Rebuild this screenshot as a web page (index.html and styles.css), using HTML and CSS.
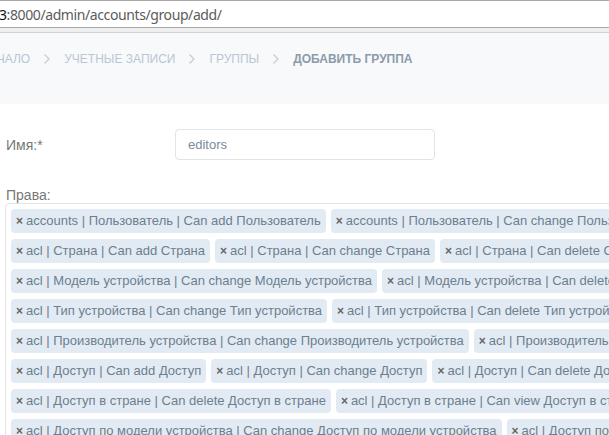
FILE: index.html
```html
<!DOCTYPE html>
<html lang="ru">
<head>
  <meta charset="UTF-8" />
  <meta name="viewport" content="width=device-width, initial-scale=1">
  <title>Добавить группа</title>
  <link rel="stylesheet" href="styles.css">
</head>
<body>
  <div class="urlbar">
    <span class="url"><span class="host">3</span>:8000/admin/accounts/group/add/</span>
  </div>
  <div class="urlbar-shadow"></div>

  <div class="page">
    <div class="crumbs">
      <a href="#">Начало</a>
      <svg class="sep" width="8" height="12" viewBox="0 0 8 12"><path d="M1.5 1.5 6 6l-4.5 4.5" fill="none" stroke="#c3ced9" stroke-width="1.3"/></svg>
      <a href="#">Учетные записи</a>
      <svg class="sep" width="8" height="12" viewBox="0 0 8 12"><path d="M1.5 1.5 6 6l-4.5 4.5" fill="none" stroke="#c3ced9" stroke-width="1.3"/></svg>
      <a href="#">Группы</a>
      <svg class="sep" width="8" height="12" viewBox="0 0 8 12"><path d="M1.5 1.5 6 6l-4.5 4.5" fill="none" stroke="#c3ced9" stroke-width="1.3"/></svg>
      <span class="current">Добавить группа</span>
    </div>

    <div class="content">
      <form class="group-form">
        <div class="form-row">
          <label for="name">Имя:*</label>
          <input type="text" id="name" value="editors">
        </div>

        <div class="perm-label">Права:</div>
        <div class="select-box">
          <ul class="chips">
            <li class="chip"><span class="remove">×</span>accounts | Пользователь | Can add Пользователь</li>
            <li class="chip"><span class="remove">×</span>accounts | Пользователь | Can change Пользователь</li>
            <li class="chip"><span class="remove">×</span>accounts | Пользователь | Can delete Пользователь</li>
            <li class="chip"><span class="remove">×</span>accounts | Пользователь | Can view Пользователь</li>
            <li class="chip"><span class="remove">×</span>acl | Страна | Can add Страна</li>
            <li class="chip"><span class="remove">×</span>acl | Страна | Can change Страна</li>
            <li class="chip"><span class="remove">×</span>acl | Страна | Can delete Страна</li>
            <li class="chip"><span class="remove">×</span>acl | Страна | Can view Страна</li>
            <li class="chip"><span class="remove">×</span>acl | Модель устройства | Can add Модель устройства</li>
            <li class="chip"><span class="remove">×</span>acl | Модель устройства | Can change Модель устройства</li>
            <li class="chip"><span class="remove">×</span>acl | Модель устройства | Can delete Модель устройства</li>
            <li class="chip"><span class="remove">×</span>acl | Модель устройства | Can view Модель устройства</li>
            <li class="chip"><span class="remove">×</span>acl | Тип устройства | Can add Тип устройства</li>
            <li class="chip"><span class="remove">×</span>acl | Тип устройства | Can change Тип устройства</li>
            <li class="chip"><span class="remove">×</span>acl | Тип устройства | Can delete Тип устройства</li>
            <li class="chip"><span class="remove">×</span>acl | Тип устройства | Can view Тип устройства</li>
            <li class="chip"><span class="remove">×</span>acl | Производитель устройства | Can add Производитель устройства</li>
            <li class="chip"><span class="remove">×</span>acl | Производитель устройства | Can change Производитель устройства</li>
            <li class="chip"><span class="remove">×</span>acl | Производитель устройства | Can delete Производитель устройства</li>
            <li class="chip"><span class="remove">×</span>acl | Производитель устройства | Can view Производитель устройства</li>
            <li class="chip"><span class="remove">×</span>acl | Доступ | Can add Доступ</li>
            <li class="chip"><span class="remove">×</span>acl | Доступ | Can change Доступ</li>
            <li class="chip"><span class="remove">×</span>acl | Доступ | Can delete Доступ</li>
            <li class="chip"><span class="remove">×</span>acl | Доступ | Can view Доступ</li>
            <li class="chip"><span class="remove">×</span>acl | Доступ в стране | Can add Доступ в стране</li>
            <li class="chip"><span class="remove">×</span>acl | Доступ в стране | Can change Доступ в стране</li>
            <li class="chip"><span class="remove">×</span>acl | Доступ в стране | Can delete Доступ в стране</li>
            <li class="chip"><span class="remove">×</span>acl | Доступ в стране | Can view Доступ в стране</li>
            <li class="chip"><span class="remove">×</span>acl | Доступ по модели устройства | Can add Доступ по модели устройства</li>
            <li class="chip"><span class="remove">×</span>acl | Доступ по модели устройства | Can change Доступ по модели устройства</li>
            <li class="chip"><span class="remove">×</span>acl | Доступ по модели устройства | Can delete Доступ по модели устройства</li>
            <li class="chip"><span class="remove">×</span>acl | Доступ по модели устройства | Can view Доступ по модели устройства</li>
          </ul>
        </div>
      </form>
    </div>
  </div>
</body>
</html>
```

FILE: styles.css
```css
/* Django admin add-group page, scrolled to the right */
html, body {
  overflow: hidden;
}
body {
  margin: 0;
  background: #fff;
  font-family: "Liberation Sans", Arial, sans-serif;
  color: #666;
}

/* browser address bar */
.urlbar {
  height: 26px;
  border-top: 1px solid #a8a8a8;
  border-bottom: 1px solid #a8a8a8;
  background: #fff;
  display: flex;
  align-items: center;
  white-space: nowrap;
}
.url {
  font-family: "Noto Sans", "DejaVu Sans", sans-serif;
  font-size: 14px;
  letter-spacing: -0.4px;
  color: #5b5b5b;
  margin: 1px 0 0 -1px;
}
.host {
  color: #111;
}
.urlbar-shadow {
  height: 4px;
  background: #efefef;
  border-bottom: 1px solid #d2d2d2;
}

/* breadcrumbs band */
.crumbs {
  background: #f8f9fa;
  height: 71px;
  display: flex;
  align-items: center;
  gap: 13px;
  margin-left: -19px;
  padding-bottom: 20px;
  box-sizing: border-box;
  white-space: nowrap;
  font-size: 12px;
  text-transform: uppercase;
}
.crumbs a {
  color: #b9c7d4;
  text-decoration: none;
}
.crumbs .sep {
  flex: none;
}
.crumbs .current {
  color: #8c9bab;
  font-weight: bold;
}

/* form */
.content {
  padding: 25px 0 0 6px;
}
.form-row {
  display: flex;
  align-items: center;
}
.form-row label {
  width: 169px;
  font-size: 14px;
  color: #777;
}
.form-row input {
  width: 260px;
  height: 31px;
  box-sizing: border-box;
  border: 1px solid #e3e3e3;
  border-radius: 4px;
  padding: 0 12px;
  font-family: inherit;
  font-size: 13px;
  color: #7b8b9b;
}
.perm-label {
  margin-top: 28px;
  font-size: 14px;
  color: #777;
  line-height: 15px;
}
.select-box {
  margin-left: -1px;
  border: 1px solid #e4e4e4;
  border-radius: 4px;
  padding: 5px;
  width: 1500px;
}
.chips {
  list-style: none;
  margin: 0;
  padding: 0;
  display: flex;
  flex-wrap: wrap;
  gap: 6px 5px;
}
.chip {
  height: 24px;
  line-height: 24px;
  padding: 0 5px;
  border-radius: 4px;
  background: #e2ebf3;
  color: #6d7e8f;
  font-size: 13px;
  white-space: nowrap;
}
.chip .remove {
  font-weight: bold;
  font-size: 12px;
  color: #666;
  margin-right: 3px;
}
```
